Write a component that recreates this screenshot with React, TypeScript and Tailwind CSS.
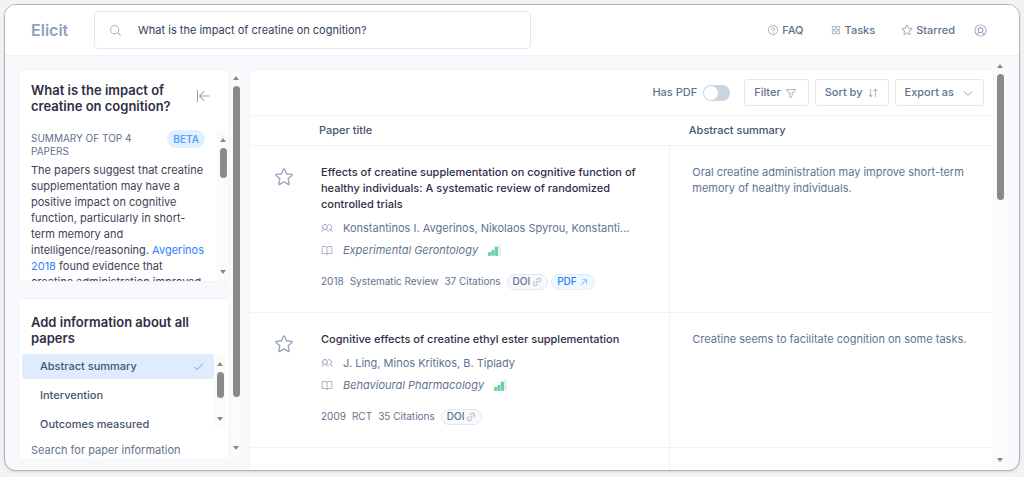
import { useState } from "react";
import type { ReactNode } from "react";
import clsx from "clsx";
import {
  PiArrowLineLeft,
  PiArrowUpRight,
  PiArrowsDownUp,
  PiBookOpen,
  PiCaretDown,
  PiCheck,
  PiFunnel,
  PiLinkSimple,
  PiMagnifyingGlass,
  PiQuestion,
  PiSquaresFour,
  PiStar,
  PiUserCircle,
  PiUsers,
} from "react-icons/pi";

type Paper = {
  title: string;
  authors: string;
  journal: string;
  year: number;
  kind: string;
  citations: number;
  hasPdf: boolean;
  summary: string;
};

const PAPERS: Paper[] = [
  {
    title:
      "Effects of creatine supplementation on cognitive function of healthy individuals: A systematic review of randomized controlled trials",
    authors: "Konstantinos I. Avgerinos, Nikolaos Spyrou, Konstanti...",
    journal: "Experimental Gerontology",
    year: 2018,
    kind: "Systematic Review",
    citations: 37,
    hasPdf: true,
    summary:
      "Oral creatine administration may improve short-term memory of healthy individuals.",
  },
  {
    title: "Cognitive effects of creatine ethyl ester supplementation",
    authors: "J. Ling, Minos Kritikos, B. Tiplady",
    journal: "Behavioural Pharmacology",
    year: 2009,
    kind: "RCT",
    citations: 35,
    hasPdf: false,
    summary: "Creatine seems to facilitate cognition on some tasks.",
  },
];

const COLUMNS = ["Abstract summary", "Intervention", "Outcomes measured"];

/** Always-visible scrollbar track; the thumb is sized by the caller. */
function Scrollbar({ thumb, className }: { thumb: string; className?: string }) {
  return (
    <div
      aria-hidden="true"
      className={clsx(
        "flex w-3 shrink-0 flex-col items-center bg-[#fbfbfb] text-[#8a8a8a]",
        className,
      )}
    >
      <svg viewBox="0 0 6 4" className="h-1 w-1.5 shrink-0" fill="currentColor">
        <path d="M3 0 6 4H0z" />
      </svg>
      <div className={clsx("mt-1.5 w-[7px] rounded-full bg-[#8a8a8a]", thumb)} />
      <svg viewBox="0 0 6 4" className="mt-auto h-1 w-1.5 shrink-0" fill="currentColor">
        <path d="M3 4 0 0h6z" />
      </svg>
    </div>
  );
}

function NavLink({ icon, children }: { icon: ReactNode; children: ReactNode }) {
  return (
    <a href="#" className="flex items-center gap-[3px] font-medium text-slate-500">
      <span className="text-slate-400">{icon}</span>
      {children}
    </a>
  );
}

function ToolbarButton({ children }: { children: ReactNode }) {
  return (
    <button
      type="button"
      className="flex h-[27px] items-center gap-1 rounded-[3px] border border-[#e2e8f0] bg-white px-[9px] font-medium text-slate-500"
    >
      {children}
    </button>
  );
}

function JournalRank() {
  return (
    <svg viewBox="0 0 13 12" className="h-3 w-[13px]" aria-hidden="true">
      <rect x="0" y="8" width="3" height="4" rx="1" fill="#68d2a0" />
      <rect x="3.3" y="6" width="3" height="6" rx="1" fill="#68d2a0" />
      <rect x="6.6" y="2.5" width="3.4" height="9.5" rx="1" fill="#68d2a0" />
      <rect x="10.2" y="0" width="2.6" height="12" rx="1" fill="#e8ecf3" />
    </svg>
  );
}

function Header() {
  return (
    <header className="flex h-[51px] shrink-0 items-center border-b border-[#edf1f6] bg-white pr-[31px] pl-[26px]">
      <a href="#" className="w-[63px] text-base font-semibold text-slate-400">
        Elicit
      </a>
      <form className="flex h-[38px] w-[437px] items-center rounded-[4px] border border-[#e2e8f0] px-[14px]">
        <label htmlFor="query" className="text-slate-400">
          <PiMagnifyingGlass className="size-[13px]" aria-label="Search" />
        </label>
        <input
          id="query"
          defaultValue="What is the impact of creatine on cognition?"
          className="ml-4 min-w-0 flex-1 text-slate-700 outline-none"
        />
      </form>
      <nav className="ml-auto flex items-center gap-[26px]">
        <NavLink icon={<PiQuestion className="size-3" />}>FAQ</NavLink>
        <NavLink icon={<PiSquaresFour className="size-3" />}>Tasks</NavLink>
        <NavLink icon={<PiStar className="size-3" />}>Starred</NavLink>
        <button type="button" aria-label="Account" className="-ml-2 text-slate-400">
          <PiUserCircle className="size-[15px]" />
        </button>
      </nav>
    </header>
  );
}

function SummaryCard() {
  return (
    <section className="flex h-[213px] shrink-0 flex-col overflow-hidden rounded-[5px] border border-[#eff3f9] bg-white">
      <div className="flex items-start justify-between pt-3 pr-[18px] pl-3">
        <h2 className="w-36 text-[13px] leading-4 font-semibold text-[#2f2f45]">
          What is the impact of creatine on cognition?
        </h2>
        <button type="button" aria-label="Collapse sidebar" className="mt-1.5 text-slate-400">
          <PiArrowLineLeft className="size-4" />
        </button>
      </div>
      <div className="mt-4 flex min-h-0 flex-1">
        <div className="min-w-0 flex-1 overflow-hidden pr-3 pl-3">
          <div className="flex items-start justify-between pt-0.5">
            <h3 className="w-28 text-[10px] leading-[13px] text-slate-500">
              SUMMARY OF TOP 4 PAPERS
            </h3>
            <span className="-mt-0.5 rounded-full bg-[#e0f0fe] px-1.5 py-px text-[10px] leading-4 font-semibold text-blue-400">
              BETA
            </span>
          </div>
          <p className="mt-1 w-44 leading-4 text-[#3d4258]">
            The papers suggest that creatine supplementation may have a positive
            impact on cognitive function, particularly in short-term memory and
            intelligence/reasoning.{" "}
            <a href="#" className="text-blue-500">
              Avgerinos 2018
            </a>{" "}
            found evidence that creatine administration improved
          </p>
        </div>
        <Scrollbar thumb="h-[30px]" className="pt-2 pb-[7px]" />
      </div>
    </section>
  );
}

function ColumnsCard() {
  const [selected, setSelected] = useState(COLUMNS[0]);

  return (
    <section className="mt-4 shrink-0 rounded-t-[5px] border border-[#eff3f9] bg-white">
      <h2 className="px-3 pt-[15px] text-[13px] leading-4 font-semibold text-[#2f2f45]">
        Add information about all papers
      </h2>
      <div className="mt-2 flex items-start pr-[3px] pl-[3px]">
        <div className="flex min-w-0 flex-1 flex-col gap-1">
          {COLUMNS.map((name) => (
            <button
              key={name}
              type="button"
              onClick={() => setSelected(name)}
              className={clsx(
                "flex h-[25px] items-center justify-between rounded-[3px] pr-2.5 pl-[18px] font-medium text-slate-600",
                name === selected && "bg-[#dfecfd]",
              )}
            >
              {name}
              {name === selected && <PiCheck className="size-[11px] text-blue-400" />}
            </button>
          ))}
        </div>
        <Scrollbar thumb="h-[26px]" className="h-[74px] pt-2 pb-[7px]" />
      </div>
      <input
        aria-label="Search for paper information"
        placeholder="Search for paper information"
        className="mt-[5px] w-full px-3 pb-4 leading-4 outline-none placeholder:text-slate-500"
      />
    </section>
  );
}

function PaperRow({ paper }: { paper: Paper }) {
  return (
    <tr className="border-b border-[#f0f4f9] align-top">
      <td className="border-r border-[#f0f4f9] pt-[18px] pr-5 pb-[22px]">
        <div className="flex">
          <button
            type="button"
            aria-label="Star paper"
            className="mt-[3px] mr-[27px] ml-6 size-5 shrink-0 text-slate-400"
          >
            <PiStar className="size-5" />
          </button>
          <div className="min-w-0 flex-1">
            <h3 className="leading-4 font-medium text-[#2f2f45]">{paper.title}</h3>
            <p className="mt-2 flex items-center gap-2.5 leading-4 text-slate-500">
              <PiUsers className="size-3 shrink-0 text-slate-400" />
              <span className="truncate">{paper.authors}</span>
            </p>
            <p className="mt-1.5 flex items-center gap-2.5 leading-4 text-slate-500">
              <PiBookOpen className="size-3 shrink-0 text-slate-400" />
              <span className="italic">{paper.journal}</span>
              <JournalRank />
            </p>
            <div className="mt-4 flex h-4 items-center gap-1.5 text-[10px] whitespace-nowrap text-slate-500">
              <span>{paper.year}</span>
              <span>{paper.kind}</span>
              <span>{paper.citations} Citations</span>
              <div className="flex gap-[3px] font-medium">
                <a
                  href="#"
                  className="flex h-4 items-center gap-0.5 rounded-full border border-[#e2e8f0] bg-[#f8f9fb] px-[5px]"
                >
                  DOI
                  <PiLinkSimple className="size-2.5 text-slate-400" />
                </a>
                {paper.hasPdf && (
                  <a
                    href="#"
                    className="flex h-4 items-center gap-0.5 rounded-full border border-[#e0effd] bg-[#f0f8ff] px-[5px] text-blue-500"
                  >
                    PDF
                    <PiArrowUpRight className="size-2.5 text-blue-400" />
                  </a>
                )}
              </div>
            </div>
          </div>
        </div>
      </td>
      <td className="pt-[18px] pr-5 pl-[22px] leading-4 text-slate-500">{paper.summary}</td>
    </tr>
  );
}

function PapersPanel() {
  const [pdfOnly, setPdfOnly] = useState(false);

  return (
    <section className="flex min-w-0 flex-1 flex-col overflow-hidden rounded-t-[5px] border border-b-0 border-[#f0f4f9] bg-white">
      <div className="flex h-[46px] shrink-0 items-center justify-end gap-1.5 border-b border-[#f0f4f9] pr-[9px]">
        <label className="mr-2 flex items-center gap-1.5 font-medium text-slate-500">
          Has PDF
          <input
            type="checkbox"
            role="switch"
            checked={pdfOnly}
            onChange={(e) => setPdfOnly(e.target.checked)}
            className="h-4 w-[27px] appearance-none rounded-full bg-slate-300 p-px before:block before:size-3.5 before:rounded-full before:bg-white checked:bg-blue-400 checked:before:ml-[11px]"
          />
        </label>
        <ToolbarButton>
          Filter
          <PiFunnel className="mr-0.5 size-3 text-slate-400" />
        </ToolbarButton>
        <ToolbarButton>
          Sort by
          <PiArrowsDownUp className="size-3 text-slate-400" />
        </ToolbarButton>
        <ToolbarButton>
          Export as
          <PiCaretDown className="ml-1 size-3 text-slate-400" />
        </ToolbarButton>
      </div>
      <table className="w-full grow table-fixed border-collapse">
        <thead>
          <tr className="h-[29px] border-b border-[#f0f4f9] text-left text-[11px] text-slate-600">
            <th className="w-[56.5%] pl-[69px] font-medium">Paper title</th>
            <th className="pl-[19px] font-medium">Abstract summary</th>
          </tr>
        </thead>
        <tbody>
          {PAPERS.map((paper) => (
            <PaperRow key={paper.title} paper={paper} />
          ))}
          <tr className="h-24">
            <td className="border-r border-[#f0f4f9]" />
            <td />
          </tr>
        </tbody>
      </table>
    </section>
  );
}

export default function App() {
  return (
    <div className="flex h-screen bg-[#f3f3f3] px-1 pt-1 pb-1.5 font-['Inter',sans-serif] text-[11px]">
      <div className="flex min-w-0 flex-1 flex-col overflow-hidden rounded-xl border border-[#b5b5b5] bg-[#f8f9fc] shadow-sm">
        <Header />
        <main className="flex min-h-0 flex-1 px-[13px]">
          <aside className="mt-[13px] mb-3 flex w-56 shrink-0 overflow-hidden">
            <div className="flex min-w-0 flex-1 flex-col overflow-hidden">
              <SummaryCard />
              <ColumnsCard />
            </div>
            <Scrollbar thumb="h-[311px]" className="pt-[7px] pb-2" />
          </aside>
          <div className="mt-[13px] ml-[7px] flex min-w-0 flex-1">
            <PapersPanel />
          </div>
          <Scrollbar thumb="h-[126px]" className="mt-1.5 pt-0.5 pb-2" />
        </main>
      </div>
    </div>
  );
}
